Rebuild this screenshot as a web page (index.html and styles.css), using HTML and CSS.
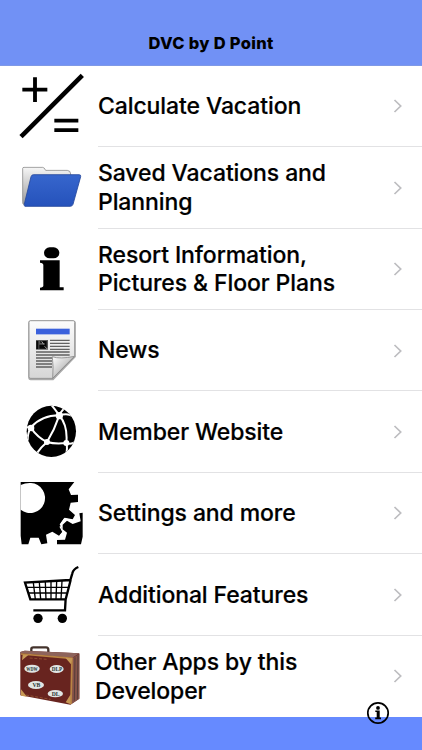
FILE: index.html
```
<!DOCTYPE html>
<html lang="en">
<head>
    <meta charset="UTF-8">
    <meta name="viewport" content="width=device-width, initial-scale=1.0">
    <title>DVC by D Point</title>
    <link rel="stylesheet" href="styles.css">
</head>
<body>
    <header class="navbar">
        <h1>DVC by D Point</h1>
    </header>
    <main class="menu">
        <a class="menu-row" href="#">
            <svg class="icon" viewBox="0 -1 270 244">
                <path d="M38 206 L212 32" stroke="#000" stroke-width="14" stroke-linecap="square"/>
                <path d="M37 70H112M75 33V107M133 163H205M133 191.500H205" stroke="#000" stroke-width="11.500"/>
            </svg>
            <span class="label">Calculate Vacation</span>
            <svg class="chevron" viewBox="0 0 10 16"><path d="M1.500 2 L7.700 8 L1.500 14"/></svg>
        </a>
        <a class="menu-row" href="#">
            <svg class="icon" viewBox="0 -9 270 244">
                <defs>
                    <linearGradient id="paper" x1="0" y1="0" x2="0" y2="1">
                        <stop offset="0" stop-color="#f6f6f6"/>
                        <stop offset="1" stop-color="#9b9b9b"/>
                    </linearGradient>
                    <linearGradient id="folder" x1="0" y1="0" x2="0" y2="1">
                        <stop offset="0" stop-color="#3766cd"/>
                        <stop offset="1" stop-color="#2552bb"/>
                    </linearGradient>
                </defs>
                <path d="M38 55Q38 52 42 52H98Q103 52 107 61H172Q182 62 182 72V160H46Q38 168 38 155Z" fill="url(#paper)" stroke="#777" stroke-width="2"/>
                <path d="M70 74H208Q213 74 212 80L189 163Q187 169 180 169H45Q41 168 43 162L63 80Q65 74 70 74Z" fill="url(#folder)" stroke="#24479c" stroke-width="2.500"/>
            </svg>
            <span class="label">Saved Vacations and Planning</span>
            <svg class="chevron" viewBox="0 0 10 16"><path d="M1.500 2 L7.700 8 L1.500 14"/></svg>
        </a>
        <a class="menu-row" href="#">
            <svg class="icon" viewBox="0 -10 270 244">
                <rect x="102" y="45" width="46" height="33" rx="17"/>
                <path d="M90 84H149V165H161V174H90V166Q100 165 100 160V98Q100 92 90 91Z"/>
            </svg>
            <span class="label">Resort Information, Pictures &amp; Floor Plans</span>
            <svg class="chevron" viewBox="0 0 10 16"><path d="M1.500 2 L7.700 8 L1.500 14"/></svg>
        </a>
        <a class="menu-row" href="#">
            <svg class="icon" viewBox="0 -6 270 244">
                <defs>
                    <linearGradient id="sheet" x1="0" y1="0" x2="0" y2="1">
                        <stop offset="0" stop-color="#fcfcfc"/>
                        <stop offset="1" stop-color="#d6d6d6"/>
                    </linearGradient>
                    <linearGradient id="curl" x1="0" y1="0" x2="1" y2="1">
                        <stop offset="0" stop-color="#fff"/>
                        <stop offset="0.600" stop-color="#bdbdbd"/>
                    </linearGradient>
                </defs>
                <path d="M62 28H190Q195 28 195 33V134L129 202H62Q57 202 57 196V33Q57 28 62 28Z" fill="#888" stroke="#aaa" stroke-width="5"/>
                <path d="M61 26H190Q194 26 194 31V133L128 199H62Q57 199 57 194V31Q57 26 61 26Z" fill="url(#sheet)" stroke="#999" stroke-width="3"/>
                <rect x="78" y="50" width="101" height="17" fill="#3b61dc"/>
                <rect x="78" y="84" width="36" height="29" fill="#555"/>
                <path d="M82 87V111M91 90H107V101H91V107H111" stroke="#080808" stroke-width="6" fill="none"/>
                <path d="M95 88L101 97M104 103L113 112" stroke="#aaa" stroke-width="3"/>
                <path d="M120 85H179M120 94H179M120 103H179M120 112H179M78 120H179M78 129H179M78 138H126M78 147H126M78 156H126M78 165H126" stroke="#606060" stroke-width="4"/>
                <path d="M127 134Q150 142 193 133Q160 166 128 199Q131 163 127 134Z" fill="url(#curl)" stroke="#888" stroke-width="2.500"/>
            </svg>
            <span class="label">News</span>
            <svg class="chevron" viewBox="0 0 10 16"><path d="M1.500 2 L7.700 8 L1.500 14"/></svg>
        </a>
        <a class="menu-row" href="#">
            <svg class="icon" viewBox="0 -9 270 244">
                <defs>
                    <clipPath id="globe"><ellipse cx="124" cy="112" rx="74" ry="77"/></clipPath>
                </defs>
                <ellipse cx="124" cy="112" rx="74" ry="77"/>
                <g clip-path="url(#globe)">
                    <path d="M122 30Q133 43 148 64Q156 46 169 40M148 64Q172 56 188 66M148 64Q174 95 169 147M148 64Q134 106 111 144M148 64Q94 64 62 101M62 101Q54 97 46 102M62 101Q53 116 53 139M62 101Q84 132 111 144Q136 151 169 147M111 144Q92 160 78 181M169 147Q174 168 166 190M169 147Q184 152 195 144" fill="none" stroke="#fff" stroke-width="6"/>
                    <circle cx="148" cy="65" r="11" fill="#fff"/>
                    <circle cx="63" cy="102" r="10" fill="#fff"/>
                    <circle cx="111" cy="144" r="9" fill="#fff"/>
                    <circle cx="169" cy="147" r="9" fill="#fff"/>
                </g>
            </svg>
            <span class="label">Member Website</span>
            <svg class="chevron" viewBox="0 0 10 16"><path d="M1.500 2 L7.700 8 L1.500 14"/></svg>
        </a>
        <a class="menu-row" href="#">
            <svg class="icon" viewBox="0 -7 270 244">
                <path d="M32 20H193L176 42L183 59L204 58V80L182 82L177 103L195 119L188 132L164 127L149 147L159 168L147 181L127 169L108 178L112 204L94 207L86 187H61L55 207H35L32 181Z"/>
                <path d="M32 29Q47 22 63 23A45 45 0 1 1 32 103Z" fill="#fff"/>
                <path d="M158 148L171 136L188 146L212 138L208 114L218 112V184L213 207H141V194L165 193L171 172L158 162Z"/>
                <path d="M154 145L163 131L188 135M150 153L159 170L151 181" stroke="#fff" stroke-width="4" fill="none"/>
            </svg>
            <span class="label">Settings and more</span>
            <svg class="chevron" viewBox="0 0 10 16"><path d="M1.500 2 L7.700 8 L1.500 14"/></svg>
        </a>
        <a class="menu-row" href="#">
            <svg class="icon" viewBox="0 -12 270 244">
                <path d="M205 27Q190 33 187 46L181 66L45 74L61 124H167L182 66M167 121L165 157H70" fill="none" stroke="#000" stroke-width="7"/>
                <path d="M51 88H174M55 105H170M70 74L76 124M88 73L92 124M106 72L108 124M123 71V124M140 70L138 124M156 69L153 124" fill="none" stroke="#000" stroke-width="4"/>
                <circle cx="84" cy="181" r="14"/>
                <circle cx="157" cy="181" r="14"/>
            </svg>
            <span class="label">Additional Features</span>
            <svg class="chevron" viewBox="0 0 10 16"><path d="M1.500 2 L7.700 8 L1.500 14"/></svg>
        </a>
        <a class="menu-row last" href="#">
            <svg class="icon" viewBox="0 -7 270 244">
                <path d="M64 40V32Q64 27 70 27H108Q115 27 115 34V42" fill="none" stroke="#44332c" stroke-width="7"/>
                <path d="M31 41L44 37L208 45V181L181 199L31 171Z" fill="#68241f"/>
                <path d="M183 61L208 47V181L181 199Z" fill="#865349"/>
                <path d="M31 41L44 37L208 45L187 58L31 45Z" fill="#8d635b"/>
                <path d="M33 47L186 60L183 197" fill="none" stroke="#b98443" stroke-width="5"/>
                <path d="M38 49L55 50L36 66ZM166 58L187 60L183 78ZM182 168L167 192L182 198ZM33 153L51 175L33 172Z" fill="#c79854"/>
                <path d="M195 57L193 187M204 51L202 183" stroke="#553c39" stroke-width="3"/>
                <path d="M59 59L113 63M48 170L122 183" stroke="#a26337" stroke-width="2" stroke-dasharray="9 5"/>
                <g class="stickers">
                    <ellipse cx="66" cy="91" rx="23" ry="12"/>
                    <ellipse cx="140" cy="92" rx="21" ry="12"/>
                    <ellipse cx="78" cy="140" rx="24" ry="12"/>
                    <ellipse cx="136" cy="166" rx="23" ry="11"/>
                    <text x="66" y="97" textLength="34" lengthAdjust="spacingAndGlyphs">WDW</text>
                    <text x="141" y="98" textLength="31" lengthAdjust="spacingAndGlyphs">DLP</text>
                    <text x="79" y="146">VB</text>
                    <text x="137" y="172">DL</text>
                </g>
            </svg>
            <span class="label">Other Apps by this Developer</span>
            <svg class="chevron" viewBox="0 0 10 16"><path d="M1.500 2 L7.700 8 L1.500 14"/></svg>
        </a>
    </main>
    <footer class="toolbar">
        <svg class="info" viewBox="0 0 24 24">
            <circle cx="12" cy="12" r="10.200"/>
            <circle class="fill" cx="12" cy="6.900" r="1.900"/>
            <path class="fill" d="M9.300 9.500H13.700V16.600H15V18.200H9.200V16.600H10.700V11.100H9.300Z"/>
        </svg>
    </footer>
</body>
</html>
```
FILE: styles.css
```
body {
    margin: 0;
    height: 750px;
    display: flex;
    flex-direction: column;
    overflow: hidden;
    background-color: #fff;
    color: #000;
    font-family: 'Inter', 'Liberation Sans', sans-serif;
}

.navbar {
    box-sizing: border-box;
    height: 65.8px;
    padding-top: 33px;
    background-color: #7191f5;
    border-bottom: 1px solid #7f99e6;
    text-align: center;
}

.navbar h1 {
    margin: 0;
    font-size: 16.5px;
    line-height: 20px;
    font-weight: 800;
    letter-spacing: 0.3px;
}

.menu-row {
    display: flex;
    align-items: center;
    height: 81.4px;
    padding-left: 10px;
    padding-right: 19.5px;
    color: inherit;
    text-decoration: none;
    /* separator starts under the label */
    background: linear-gradient(#e2e2e4, #e2e2e4) 98px 100% / 100% 1px no-repeat;
}

.icon {
    flex: none;
    width: 90px;
    height: 81.4px;
    margin-right: -2px;
}

.label {
    flex: none;
    width: 260px;
    font-size: 23px;
    line-height: 28.5px;
    font-weight: 500;
    letter-spacing: -0.1px;
    -webkit-text-stroke: 0.2px #000;
}

.last {
    background: none;
}

.last .icon {
    margin-right: -5px;
}

.last .label {
    padding-top: 1px;
}

.chevron {
    width: 10px;
    height: 16px;
    margin-left: auto;
    fill: none;
    stroke: #bdbdc0;
    stroke-width: 1.7;
}

.stickers ellipse {
    fill: #e1e6e4;
}

.stickers text {
    font-family: 'Liberation Serif', serif;
    font-size: 17px;
    font-weight: bold;
    text-anchor: middle;
    fill: #283331;
}

.toolbar {
    position: relative;
    flex: 1;
    background-color: #668aff;
}

/* info button sits over the toolbar edge */
.info {
    position: absolute;
    top: -16px;
    right: 32px;
    width: 24px;
    height: 24px;
}

.info circle {
    fill: none;
    stroke: #000;
    stroke-width: 1.7;
}

.info .fill {
    fill: #000;
    stroke: none;
}
```
